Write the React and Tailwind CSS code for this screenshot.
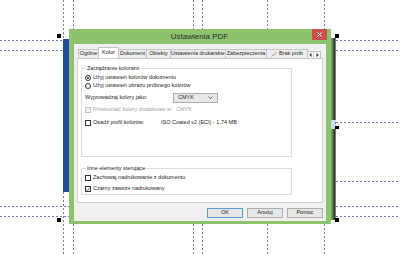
import React from 'react';

const TABS = [
  { label: 'Ogólne', w: 'w-[21px]' },
  { label: 'Kolor', w: 'w-[21px]', active: true },
  { label: 'Dokument', w: 'w-[29px]' },
  { label: 'Obiekty', w: 'w-[25px]' },
  { label: 'Ustawienia drukarskie', w: 'w-[56px]' },
  { label: 'Zabezpieczenia', w: 'w-[42px]' },
];

// tło strony: linie pomocnicze, niebieski pasek, zdjęcie, uchwyty
const Canvas = () => (
  <svg className="absolute inset-0" width="400" height="254">
    <g stroke="#7676b8" strokeWidth="1" strokeDasharray="2 2">
      <line x1="63.5" y1="0" x2="63.5" y2="254" />
      <line x1="73.5" y1="0" x2="73.5" y2="254" />
      <line x1="193.5" y1="0" x2="193.5" y2="254" />
      <line x1="202.5" y1="0" x2="202.5" y2="254" />
      <line x1="267.5" y1="0" x2="267.5" y2="254" />
      <line x1="324.5" y1="0" x2="324.5" y2="254" />
      <line x1="0" y1="40.5" x2="400" y2="40.5" />
      <line x1="0" y1="50.5" x2="400" y2="50.5" />
      <line x1="336" y1="122.5" x2="400" y2="122.5" />
      <line x1="336" y1="181.5" x2="400" y2="181.5" />
      <line x1="0" y1="206.5" x2="400" y2="206.5" />
      <line x1="0" y1="216.5" x2="400" y2="216.5" />
    </g>
    <rect x="63" y="39" width="7" height="153" fill="#1f4c9f" />
    <defs>
      <linearGradient id="strip" x1="0" x2="1" y1="0" y2="0">
        <stop offset="0" stopColor="#7fb461" />
        <stop offset="0.45" stopColor="#4d6b3a" />
        <stop offset="0.7" stopColor="#2f3a2a" />
        <stop offset="1" stopColor="#8a9a8e" />
      </linearGradient>
    </defs>
    <rect x="331" y="38" width="5" height="182" fill="url(#strip)" />
    <rect x="331" y="120" width="5" height="9" fill="#c9dcf2" />
    <line x1="335.5" y1="38" x2="335.5" y2="219" stroke="#7676b8" strokeDasharray="2 2" />
    <g fill="#000">
      <rect x="57" y="34" width="4" height="4" />
      <rect x="335" y="34" width="4" height="4" />
      <rect x="335" y="126" width="4" height="3" />
      <rect x="57" y="218" width="4" height="4" />
      <rect x="335" y="218" width="4" height="4" />
    </g>
  </svg>
);

const Radio = ({ checked }) => (
  <span className="w-[6px] h-[6px] rounded-full border border-[#333] bg-white flex items-center justify-center shrink-0">
    {checked && <span className="w-[2px] h-[2px] rounded-full bg-[#222]" />}
  </span>
);

const Check = ({ checked, disabled }) => (
  <span className={`w-[6px] h-[6px] border flex items-center justify-center shrink-0 ${disabled ? 'border-[#c4c4c4] bg-[#f2f2f2]' : 'border-[#333] bg-white'}`}>
    {checked && (
      <svg width="5" height="5" viewBox="0 0 5 5">
        <path d="M0.6 2.5 L2 3.9 L4.4 0.8" stroke="#222" strokeWidth="0.9" fill="none" />
      </svg>
    )}
  </span>
);

const Row = ({ children, className = '' }) => (
  <div className={`flex items-center gap-[2px] h-[8px] ${className}`}>{children}</div>
);

const Btn = ({ children, primary }) => (
  <div className={`w-[36px] h-[10px] flex items-center justify-center border bg-[#e6e6e6] ${primary ? 'border-[#5b9bd5]' : 'border-[#adadad]'}`}>
    {children}
  </div>
);

export default function App() {
  return (
    <div className="relative w-[400px] h-[254px] bg-white overflow-hidden text-[5.5px] leading-none text-[#262626]" style={{ fontFamily: '"Liberation Sans", Arial, sans-serif' }}>
      <Canvas />

      {/* okno dialogowe */}
      <div className="absolute left-[69px] top-[29px] w-[262px] h-[195px] bg-[#8dc36e] flex flex-col pl-[5px] pr-[5px] pb-[4px]">
        <div className="relative h-[15px] shrink-0 flex items-center justify-center">
          <span className="text-[8px] text-[#2a2a2a] -ml-[1px]">Ustawienia PDF</span>
          <div className="absolute right-[-1px] top-0 w-[15px] h-[11px] bg-[#c9504c] flex items-center justify-center">
            <svg width="5" height="5" viewBox="0 0 5 5">
              <path d="M0.5 0.5 L4.5 4.5 M4.5 0.5 L0.5 4.5" stroke="#fff" strokeWidth="1" />
            </svg>
          </div>
        </div>

        <div className="flex-1 bg-[#f0f0f0] flex flex-col px-[3px] pt-[4px] pb-[3px]">
          {/* zakładki */}
          <div className="flex items-end h-[10px] ml-[1px] relative z-10">
            {TABS.map((t) => (
              <div
                key={t.label}
                className={`${t.w} shrink-0 flex items-center justify-center border border-[#c4c4c4] -ml-[1px] first:ml-0 whitespace-nowrap ${t.active ? 'h-[11px] bg-white border-b-white' : 'h-[10px] bg-[#eeeeee] mb-[-1px]'}`}
              >
                {t.label}
              </div>
            ))}
            <div className="w-[42px] h-[10px] shrink-0 -ml-[1px] mb-[-1px] flex items-center gap-[2px] pl-[4px] border border-[#c4c4c4] bg-[#eeeeee] overflow-hidden whitespace-nowrap">
              <svg width="6" height="5" viewBox="0 0 6 5" className="shrink-0">
                <path d="M0.5 4.5 C1.5 2 2.5 4.5 3.5 2 L5.5 0.5" stroke="#8a8a8a" strokeWidth="0.8" fill="none" />
              </svg>
              <span>Brak prob</span>
            </div>
            <div className="flex ml-[-1px] mb-[-1px] h-[8px] border border-[#c4c4c4] bg-[#f7f7f7]">
              <div className="w-[6px] flex items-center justify-center border-r border-[#c4c4c4]">
                <svg width="3" height="4" viewBox="0 0 3 4"><path d="M2.5 0 L0.5 2 L2.5 4 Z" fill="#222" /></svg>
              </div>
              <div className="w-[6px] flex items-center justify-center">
                <svg width="3" height="4" viewBox="0 0 3 4"><path d="M0.5 0 L2.5 2 L0.5 4 Z" fill="#222" /></svg>
              </div>
            </div>
          </div>

          {/* panel zakładki */}
          <div className="h-[145px] w-[246px] shrink-0 bg-white border border-[#d2d2d2] flex flex-col pl-[3px] pt-[7px]">
            <fieldset className="w-[211px] border border-[#dcdcdc] px-[3px] pb-[8px]">
              <legend className="px-[1px] ml-[1px]">Zarządzanie kolorami</legend>
              <Row className="mt-[2px]">
                <Radio checked />
                <span>Użyj ustawień kolorów dokumentu</span>
              </Row>
              <Row>
                <Radio />
                <span>Użyj ustawień obrazu próbnego kolorów</span>
              </Row>
              <div className="flex items-center h-[10px] mt-[3px]">
                <span className="w-[88px]">Wyprowadzaj kolory jako:</span>
                <div className="w-[45px] h-[10px] border border-[#adadad] bg-[#e8e8e8] flex items-center justify-between px-[4px]">
                  <span>CMYK</span>
                  <svg width="5" height="3" viewBox="0 0 5 3"><path d="M0.5 0.5 L2.5 2.5 L4.5 0.5" stroke="#444" strokeWidth="0.8" fill="none" /></svg>
                </div>
              </div>
              <Row className="mt-[3px] text-[#a3a3a3]">
                <Check disabled />
                <span className="w-[81px]">Przekształć kolory dodatkowe w:</span>
                <span>CMYK</span>
              </Row>
              <Row className="mt-[5px]">
                <Check />
                <span className="w-[66px]">Osadź profil kolorów:</span>
                <span>ISO Coated v2 (ECI) - 1.74 MB</span>
              </Row>
              <div className="h-[21px]" />
            </fieldset>

            <fieldset className="w-[211px] border border-[#dcdcdc] px-[3px] pb-[1px] mt-[9px]">
              <legend className="px-[1px] ml-[1px]">Inne elementy sterujące</legend>
              <Row className="mt-[3px]">
                <Check />
                <span>Zachowaj nadrukowanie z dokumentu</span>
              </Row>
              <Row className="mt-[3px]">
                <Check checked />
                <span>Czarny zawsze nadrukowany</span>
              </Row>
            </fieldset>
          </div>

          {/* przyciski */}
          <div className="flex justify-end gap-[4px] mt-[5px]">
            <Btn primary>OK</Btn>
            <Btn>Anuluj</Btn>
            <Btn>Pomoc</Btn>
          </div>
        </div>
      </div>
    </div>
  );
}
